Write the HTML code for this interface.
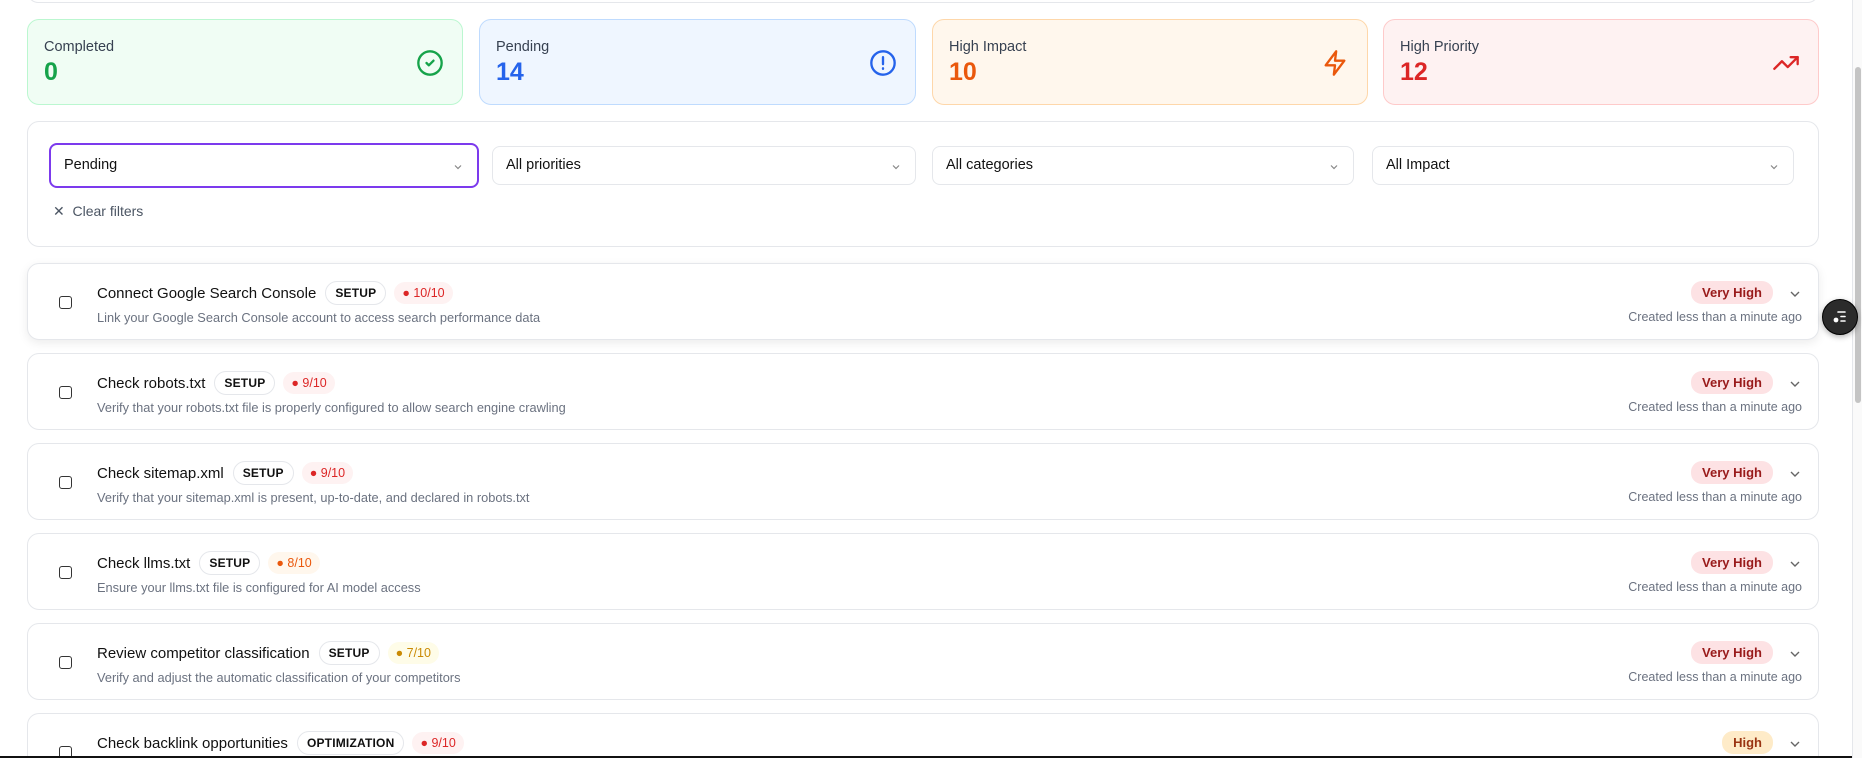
<!DOCTYPE html>
<html><head><meta charset="utf-8"><style>
*{box-sizing:border-box;margin:0;padding:0}
html,body{width:1862px;height:758px;overflow:hidden}
body{background:#fff;font-family:"Liberation Sans",sans-serif;position:relative;color:#111}
.abs{position:absolute}
.topbar{left:27px;top:-20px;width:1792px;height:23px;border:1px solid #e5e7eb;border-radius:12px}
.card{top:19px;height:86px;border-radius:12px;border:1px solid}
.card .lbl{position:absolute;left:16px;top:19px;font-size:14.5px;color:#374151}
.card .num{position:absolute;left:16px;top:38px;font-size:25px;font-weight:bold}
.card svg{position:absolute;right:18px;top:29px}
.panel{left:27px;top:121px;width:1792px;height:126px;border:1px solid #e5e7eb;border-radius:12px}
.sel{top:146px;height:39px;border:1px solid #e5e7eb;border-radius:8px;font-size:14.5px;padding-left:13px;line-height:37px;color:#111}
.sel svg{position:absolute;right:13px;top:14px}
.row{left:27px;width:1792px;height:77px;border:1px solid #e5e7eb;border-radius:12px;background:#fff}
.cb{position:absolute;left:31px;top:32px;width:13px;height:13px;border:1.8px solid #333;border-radius:3px}
.title{position:absolute;left:69px;top:17px;font-size:15px;color:#111;white-space:nowrap;display:flex;align-items:center}
.tag{display:inline-block;margin-left:9px;border:1px solid #e5e7eb;border-radius:12px;font-size:12px;font-weight:bold;padding:4px 9px;letter-spacing:.2px}
.score{display:inline-block;margin-left:8px;border-radius:12px;font-size:12.5px;padding:4px 8px}
.desc{position:absolute;left:69px;top:46px;font-size:12.8px;color:#6b7280;white-space:nowrap}
.pri{position:absolute;right:45px;top:17px;font-size:13px;font-weight:bold;border-radius:11px;padding:4px 11px}
.chev{position:absolute;right:16px;top:23px}
.created{position:absolute;right:16px;top:46px;font-size:12.5px;color:#6b7280}
</style></head><body>
<div class="abs topbar"></div>

<div class="abs card" style="left:27px;width:436px;background:#f0fdf4;border-color:#bbf7d0">
<div class="lbl">Completed</div><div class="num" style="color:#16a34a">0</div>
<svg width="28" height="28" viewBox="0 0 24 24" fill="none" stroke="#16a34a" stroke-width="2" stroke-linecap="round" stroke-linejoin="round"><circle cx="12" cy="12" r="10"/><path d="M9 12l2 2 4-4"/></svg></div>
<div class="abs card" style="left:479px;width:437px;background:#eff6ff;border-color:#bfdbfe">
<div class="lbl">Pending</div><div class="num" style="color:#2563eb">14</div>
<svg width="28" height="28" viewBox="0 0 24 24" fill="none" stroke="#2563eb" stroke-width="2" stroke-linecap="round"><circle cx="12" cy="12" r="10"/><path d="M12 7v6M12 16.5v.5"/></svg></div>
<div class="abs card" style="left:932px;width:436px;background:#fff7ed;border-color:#fed7aa">
<div class="lbl">High Impact</div><div class="num" style="color:#ea580c">10</div>
<svg width="28" height="28" viewBox="0 0 24 24" fill="none" stroke="#ea580c" stroke-width="2" stroke-linejoin="round"><path d="M13 2L4 14h8l-1 8 9-12h-8l1-8z"/></svg></div>
<div class="abs card" style="left:1383px;width:436px;background:#fef2f2;border-color:#fecaca">
<div class="lbl">High Priority</div><div class="num" style="color:#dc2626">12</div>
<svg width="28" height="28" viewBox="0 0 24 24" fill="none" stroke="#dc2626" stroke-width="2" stroke-linecap="round" stroke-linejoin="round"><path d="M22 7l-8.5 8.5-5-5L2 17"/><path d="M16 7h6v6"/></svg></div>

<div class="abs panel"></div>
<div class="abs sel" style="left:49px;top:143px;width:430px;height:45px;border:2px solid #7c3aed;line-height:41px">Pending<svg width="12" height="12" viewBox="0 0 12 12" style="top:16px"><path d="M3 4.5l3 3 3-3" fill="none" stroke="#888" stroke-width="1.2"/></svg></div>
<div class="abs sel" style="left:492px;width:424px">All priorities<svg width="12" height="12" viewBox="0 0 12 12"><path d="M3 4.5l3 3 3-3" fill="none" stroke="#888" stroke-width="1.2"/></svg></div>
<div class="abs sel" style="left:932px;width:422px">All categories<svg width="12" height="12" viewBox="0 0 12 12"><path d="M3 4.5l3 3 3-3" fill="none" stroke="#888" stroke-width="1.2"/></svg></div>
<div class="abs sel" style="left:1372px;width:422px">All Impact<svg width="12" height="12" viewBox="0 0 12 12"><path d="M3 4.5l3 3 3-3" fill="none" stroke="#888" stroke-width="1.2"/></svg></div>
<div class="abs" style="left:53px;top:203px;font-size:14px;color:#4b5563">✕&nbsp; Clear filters</div>

<div class="abs row" style="top:263px;box-shadow:0 3px 10px rgba(0,0,0,.08)"><div class="cb"></div>
<div class="title">Connect Google Search Console<span class="tag">SETUP</span><span class="score" style="background:#fef2f2;color:#dc2626">● 10/10</span></div>
<div class="desc">Link your Google Search Console account to access search performance data</div>
<div class="pri" style="background:#fde2e4;color:#991b1b">Very High</div><svg class="chev" width="14" height="14" viewBox="0 0 14 14"><path d="M3 5l4 4 4-4" fill="none" stroke="#666" stroke-width="1.4"/></svg>
<div class="created">Created less than a minute ago</div></div>

<div class="abs row" style="top:353px"><div class="cb"></div>
<div class="title">Check robots.txt<span class="tag">SETUP</span><span class="score" style="background:#fef2f2;color:#dc2626">● 9/10</span></div>
<div class="desc">Verify that your robots.txt file is properly configured to allow search engine crawling</div>
<div class="pri" style="background:#fde2e4;color:#991b1b">Very High</div><svg class="chev" width="14" height="14" viewBox="0 0 14 14"><path d="M3 5l4 4 4-4" fill="none" stroke="#666" stroke-width="1.4"/></svg>
<div class="created">Created less than a minute ago</div></div>

<div class="abs row" style="top:443px"><div class="cb"></div>
<div class="title">Check sitemap.xml<span class="tag">SETUP</span><span class="score" style="background:#fef2f2;color:#dc2626">● 9/10</span></div>
<div class="desc">Verify that your sitemap.xml is present, up-to-date, and declared in robots.txt</div>
<div class="pri" style="background:#fde2e4;color:#991b1b">Very High</div><svg class="chev" width="14" height="14" viewBox="0 0 14 14"><path d="M3 5l4 4 4-4" fill="none" stroke="#666" stroke-width="1.4"/></svg>
<div class="created">Created less than a minute ago</div></div>

<div class="abs row" style="top:533px"><div class="cb"></div>
<div class="title">Check llms.txt<span class="tag">SETUP</span><span class="score" style="background:#fff7ed;color:#ea580c">● 8/10</span></div>
<div class="desc">Ensure your llms.txt file is configured for AI model access</div>
<div class="pri" style="background:#fde2e4;color:#991b1b">Very High</div><svg class="chev" width="14" height="14" viewBox="0 0 14 14"><path d="M3 5l4 4 4-4" fill="none" stroke="#666" stroke-width="1.4"/></svg>
<div class="created">Created less than a minute ago</div></div>

<div class="abs row" style="top:623px"><div class="cb"></div>
<div class="title">Review competitor classification<span class="tag">SETUP</span><span class="score" style="background:#fefce8;color:#ca8a04">● 7/10</span></div>
<div class="desc">Verify and adjust the automatic classification of your competitors</div>
<div class="pri" style="background:#fde2e4;color:#991b1b">Very High</div><svg class="chev" width="14" height="14" viewBox="0 0 14 14"><path d="M3 5l4 4 4-4" fill="none" stroke="#666" stroke-width="1.4"/></svg>
<div class="created">Created less than a minute ago</div></div>

<div class="abs row" style="top:713px;height:43px;border-bottom:none;border-radius:12px 12px 0 0"><div class="cb"></div>
<div class="title">Check backlink opportunities<span class="tag">OPTIMIZATION</span><span class="score" style="background:#fef2f2;color:#dc2626">● 9/10</span></div>
<div class="pri" style="background:#feebc8;color:#9a3412">High</div><svg class="chev" width="14" height="14" viewBox="0 0 14 14"><path d="M3 5l4 4 4-4" fill="none" stroke="#666" stroke-width="1.4"/></svg></div>

<div class="abs" style="left:0;top:756px;width:1852px;height:2px;background:#111"></div>
<div class="abs" style="left:1852px;top:0;width:10px;height:758px;background:#fafafa;border-left:1px solid #e5e7eb"></div>
<div class="abs" style="left:1855px;top:67px;width:6px;height:336px;background:#c4c4c4;border-radius:3px"></div>

<div class="abs" style="left:1822px;top:299px;width:36px;height:36px;border-radius:50%;background:#2b2b2b;border:1.5px solid #000;box-shadow:0 2px 6px rgba(0,0,0,.3)">
<svg width="36" height="36" viewBox="0 0 36 36" style="position:absolute;left:-1.5px;top:-1.5px"><g stroke="#fff" stroke-width="1.6" stroke-linecap="round"><path d="M16 13h7M19 17.5h4M19 22h4"/></g><circle cx="14" cy="21" r="2.4" fill="#fff"/></svg></div>
</body></html>
